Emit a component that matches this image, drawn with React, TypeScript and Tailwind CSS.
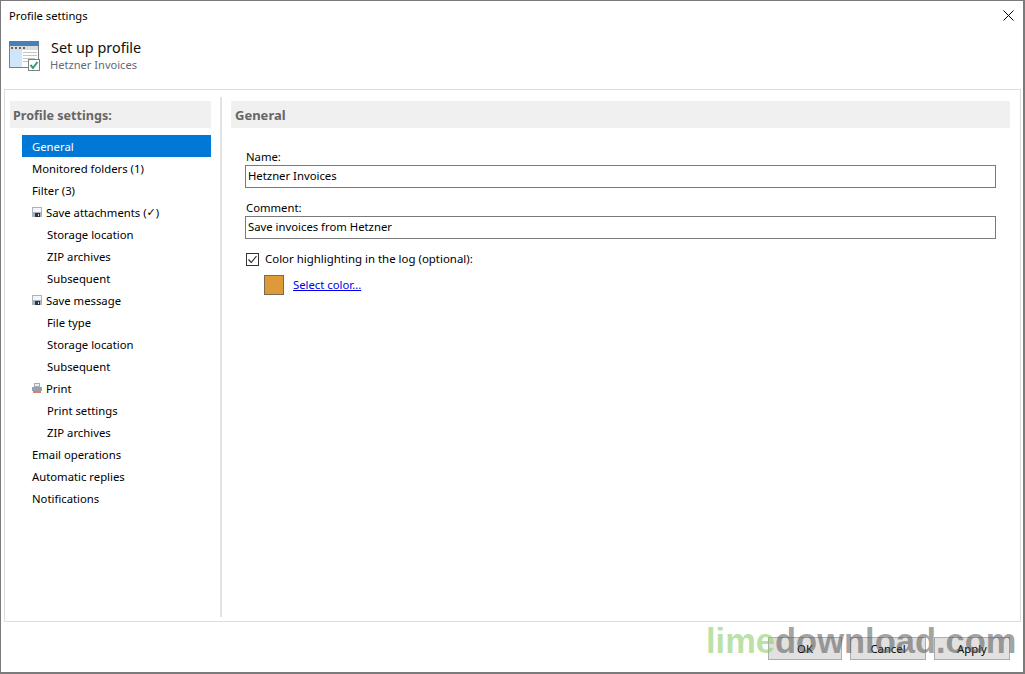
const font = "[font-family:'Noto_Sans','Open_Sans',sans-serif]";

type NavItem = { label: string; level: 0 | 1 | 2; icon?: "save" | "print"; active?: boolean; check?: boolean };

const navItems: NavItem[] = [
  { label: "General", level: 0, active: true },
  { label: "Monitored folders (1)", level: 0 },
  { label: "Filter (3)", level: 0 },
  { label: "Save attachments (", level: 1, icon: "save", check: true },
  { label: "Storage location", level: 2 },
  { label: "ZIP archives", level: 2 },
  { label: "Subsequent", level: 2 },
  { label: "Save message", level: 1, icon: "save" },
  { label: "File type", level: 2 },
  { label: "Storage location", level: 2 },
  { label: "Subsequent", level: 2 },
  { label: "Print", level: 1, icon: "print" },
  { label: "Print settings", level: 2 },
  { label: "ZIP archives", level: 2 },
  { label: "Email operations", level: 0 },
  { label: "Automatic replies", level: 0 },
  { label: "Notifications", level: 0 },
];

function SaveIcon() {
  return (
    <svg width="10" height="10" viewBox="0 0 10 10" className="mr-[4px] mb-[2px] shrink-0">
      <rect x="0" y="0" width="10" height="10" fill="#a9b4c0" />
      <rect x="1" y="1" width="8" height="4" fill="#f4f6f9" />
      <rect x="3" y="6" width="5" height="4" fill="#33383e" />
      <rect x="6" y="7" width="1" height="2" fill="#d5d9de" />
    </svg>
  );
}

function PrintIcon() {
  return (
    <svg width="10" height="10" viewBox="0 0 10 10" className="mr-[4px] mb-[2px] shrink-0">
      <rect x="2" y="0" width="6" height="4" fill="#a3abb7" />
      <rect x="3" y="1" width="4" height="2" fill="#eef0f3" />
      <rect x="0" y="4" width="10" height="4" fill="#98a1ae" />
      <rect x="1" y="8" width="8" height="2" fill="#e0806a" />
    </svg>
  );
}

function AppIcon() {
  return (
    <svg width="32" height="31" viewBox="0 0 32 31" className="shrink-0">
      <rect x="0.5" y="0.5" width="29" height="26" fill="#fff" stroke="#7f7f7f" />
      <rect x="0" y="0" width="30" height="5" fill="#4a7fb5" />
      <rect x="1" y="5" width="28" height="4" fill="#dcdcdc" />
      <rect x="2" y="6" width="2" height="2" fill="#666" />
      <rect x="6" y="6" width="2" height="2" fill="#666" />
      <rect x="10" y="6" width="2" height="2" fill="#666" />
      <rect x="14" y="6" width="2" height="2" fill="#666" />
      <rect x="1" y="9" width="12" height="17" fill="#cfe6fa" />
      <path d="M14 11.5h14M14 14.5h14M14 17.5h12M14 20.5h7" stroke="#c4c4c4" />
      <rect x="19.5" y="18.5" width="11" height="11" fill="#fff" stroke="#7f7f7f" />
      <path d="M21.5 24l2.5 3 4.5-6" fill="none" stroke="#2f9e6f" strokeWidth="2" />
    </svg>
  );
}

function TextField({ label, value, mt }: { label: string; value: string; mt: string }) {
  return (
    <div className={mt}>
      <div className="h-[16px] pl-[1px] text-[11.3px] leading-[16px] text-black">{label}</div>
      <div className="flex h-[23px] items-center border border-[#7a7a7a] bg-white pl-[2px] text-[11.3px] text-black">
        {value}
      </div>
    </div>
  );
}

function FooterButton({ label, width }: { label: string; width: string }) {
  return (
    <button
      type="button"
      className={`h-[23px] ${width} border border-[#adadad] bg-[#e1e1e1] pt-[2px] text-[11.3px] text-black`}
    >
      {label}
    </button>
  );
}

export default function App() {
  return (
    <div className={`relative flex h-[674px] w-[1025px] flex-col overflow-hidden border border-r-2 border-b-2 border-[#7b7b7b] bg-white ${font}`}>
      {/* title bar */}
      <div className="flex h-[29px] shrink-0 items-center justify-between pt-[1px] pr-[9px] pl-[8px]">
        <span className="text-[11.2px] text-black">Profile settings</span>
        <svg width="11" height="11" viewBox="0 0 11 11" className="mb-[1px]">
          <path d="M0.5 0.5l10 10M10.5 0.5l-10 10" stroke="#000" strokeWidth="1" />
        </svg>
      </div>

      {/* header */}
      <div className="flex h-[59px] shrink-0 items-start pt-[11px] pl-[8px]">
        <AppIcon />
        <div className="ml-[10px] flex flex-col">
          <span className="text-[14.4px] leading-[14px] text-[#111]">Set up profile</span>
          <span className="mt-[2px] -ml-[1px] text-[11.1px] leading-[16px] text-[#5f6b75]">Hetzner Invoices</span>
        </div>
      </div>

      {/* main panel */}
      <div className="mr-[2px] ml-[3px] flex h-[533px] shrink-0 border border-[#dcdcdc]">
        <aside className="flex w-[215px] shrink-0 flex-col pt-[11px] pl-[5px]">
          <div className="flex h-[27px] w-[201px] items-center bg-[#f0f0f0] pt-[3px] pl-[3px] text-[12.6px] font-bold text-[#666]">
            Profile settings:
          </div>
          <nav className="mt-[7px] flex w-[201px] flex-col pl-[12px]">
            {navItems.map((item, i) => (
              <div
                key={i}
                className={`flex h-[22px] items-center pt-[2px] text-[11.3px] whitespace-pre ${item.active ? "bg-[#0078d7] text-white" : "text-black"} ${
                  item.level === 2 ? "pl-[25px]" : "pl-[10px]"
                }`}
              >
                {item.icon === "save" && <SaveIcon />}
                {item.icon === "print" && <PrintIcon />}
                {item.label}
                {item.check && (
                  <>
                    <span className="text-[11px] font-normal [font-family:'DejaVu_Sans',sans-serif]">✓</span>)
                  </>
                )}
              </div>
            ))}
          </nav>
        </aside>

        <div className="mt-[7px] mb-[4px] w-[2px] shrink-0 bg-[#e3e3e3]" />

        <section className="flex-1 pt-[11px] pl-[9px]">
          <div className="flex h-[27px] w-[779px] items-center bg-[#f0f0f0] pt-[2px] pl-[4px] text-[13px] font-bold text-[#666]">
            General
          </div>
          <div className="ml-[14px] w-[751px]">
            <TextField label="Name:" value="Hetzner Invoices" mt="mt-[21px]" />
            <TextField label="Comment:" value="Save invoices from Hetzner" mt="mt-[12px]" />
            <div className="mt-[12px] flex h-[16px] items-center pl-[1px]">
              <span className="flex size-[13px] items-center justify-center border border-[#333] bg-white">
                <svg width="11" height="11" viewBox="0 0 11 11">
                  <path d="M1.5 5.5l2.8 3 5.2-6.5" fill="none" stroke="#222" strokeWidth="1.1" />
                </svg>
              </span>
              <span className="ml-[6px] text-[11.45px] text-black">Color highlighting in the log (optional):</span>
            </div>
            <div className="mt-[8px] ml-[19px] flex items-center">
              <span className="size-[20px] border border-[#7a6a50] bg-[#de9a38]" />
              <a className="ml-[9px] text-[11.3px] text-[#0000ee] underline">Select color...</a>
            </div>
          </div>
        </section>
      </div>

      {/* footer */}
      <div className="flex flex-1 items-start justify-end gap-[8px] pt-[15px] pr-[13px]">
        <FooterButton label="OK" width="w-[74px]" />
        <FooterButton label="Cancel" width="w-[76px]" />
        <FooterButton label="Apply" width="w-[76px]" />
      </div>

      {/* watermark */}
      <div className="pointer-events-none absolute top-[617px] left-[705px] text-[34.5px] leading-[46px] font-bold whitespace-nowrap [font-family:'Liberation_Sans',sans-serif]">
        <span className="text-[#8fce6a]/60">lime</span>
        <span className="text-[#555]/55">download.com</span>
      </div>
    </div>
  );
}
